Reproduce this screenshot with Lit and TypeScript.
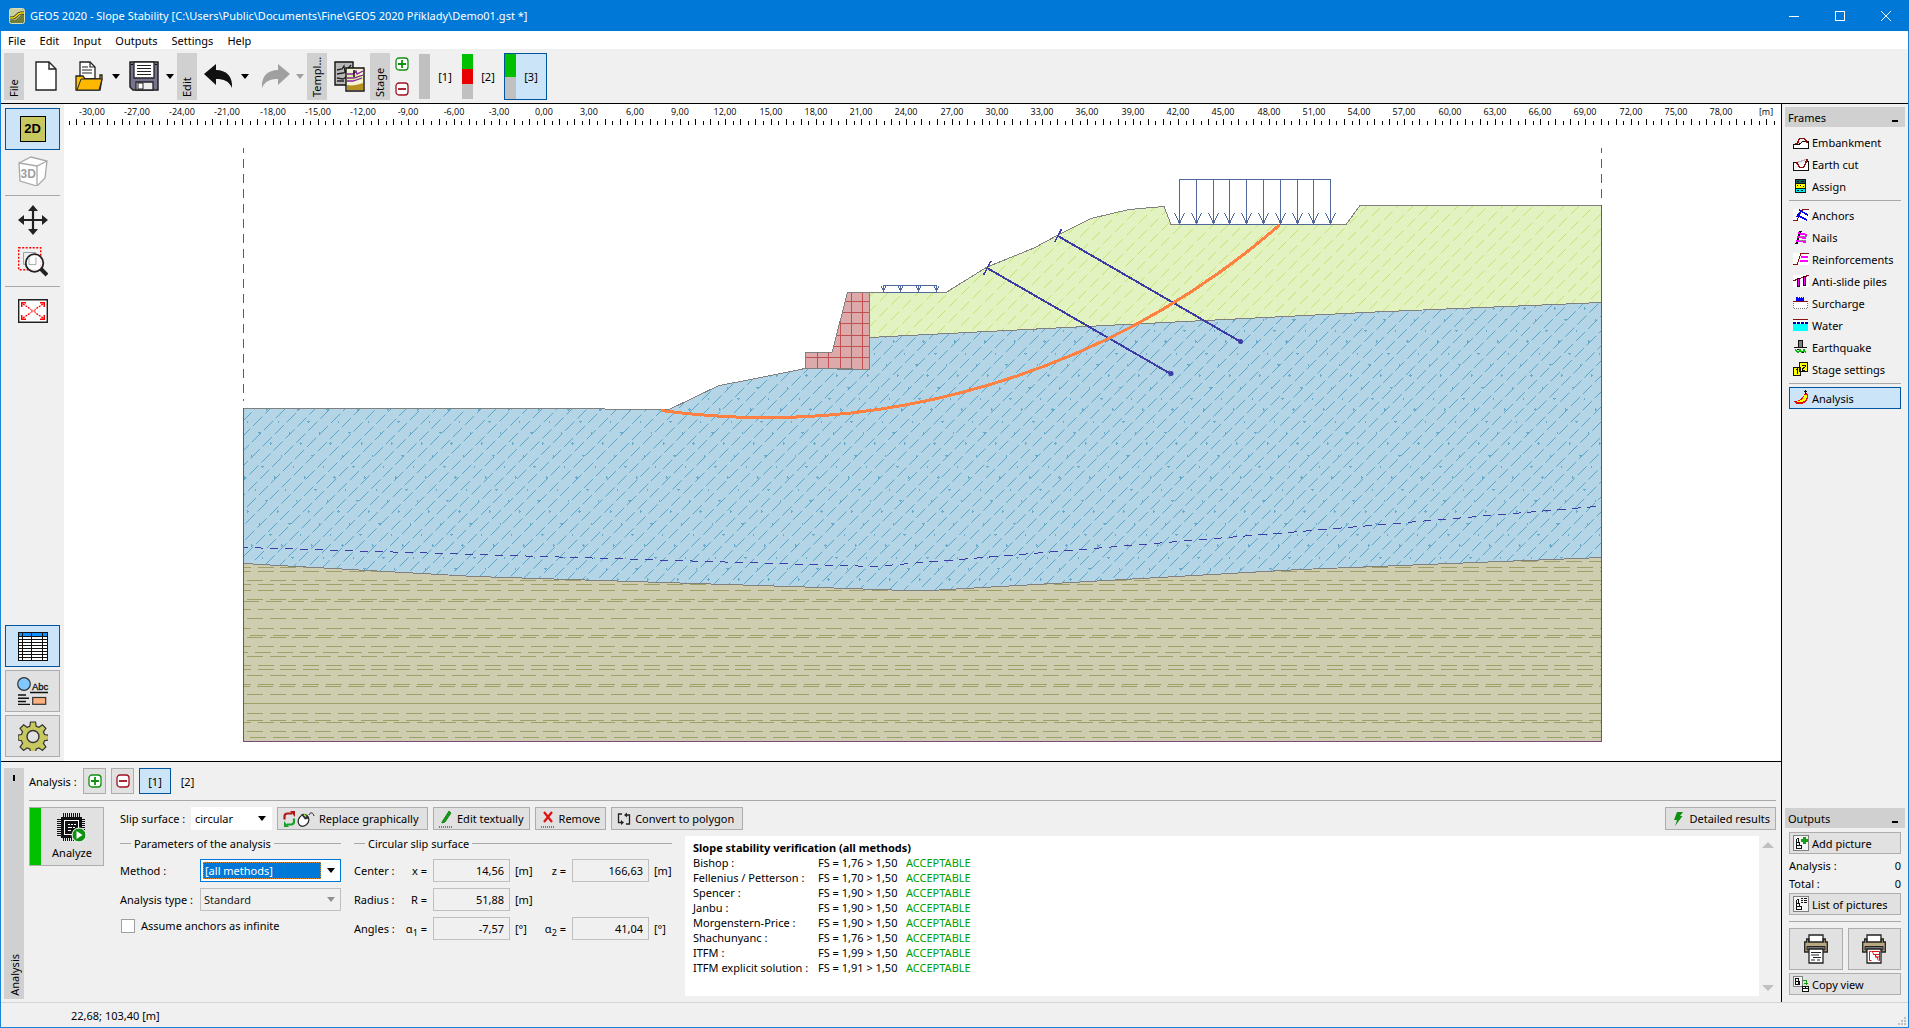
import { LitElement, html, svg, css, nothing } from "lit";
import { customElement } from "lit/decorators.js";
import { classMap } from "lit/directives/class-map.js";

const UNIT = 15.09;
const ORIGIN = 545.2;

/* Soil polygons, in canvas coordinates */
const GREEN =
  "869,292.5 946,292.5 987,267 1002,261 1034,248 1058,235 1091,218.5 1129,209.5 1164,206.5 1171,224.5 1346,224.5 1360,205.5 1601.5,205.5 1601.5,302.5 1375,312 1305,315.5 1155,323 869,337.5";
const BLUE =
  "243.5,408.5 575,408.5 635,409.5 668,410 719,385.5 746,380.5 805,368.5 837,368.5 869,369.5 869,337.5 1155,323 1305,315.5 1375,312 1601.5,302.5 1601.5,557.5 1300,569.5 921,591 790,586.5 475,576.5 243.5,563.5";
const KHAKI =
  "243.5,563.5 475,576.5 790,586.5 921,591 1300,569.5 1601.5,557.5 1601.5,741 243.5,741";
const WALL = "805.5,368.5 805.5,352.5 832,352.5 847.5,292.5 869.5,292.5 869.5,369.5 837.5,369.5 837.5,368.5";

/* Horizontal layers of the lower soil: [y, dash phase] */
const LAYERS: Array<[number, number]> = [
  [561, 16], [567, 4], [571, 4], [580, 16], [584, 4], [590, 4], [599, 16], [601, 12], [609, 4], [618, 16],
  [628, 4], [635, 19], [637, 16], [646, 4], [652, 1], [656, 16], [665, 4], [669, 4], [675, 16], [684, 4],
  [686, 3], [694, 16], [703, -1], [713, 16], [720, 16], [722, 4], [731, 16], [737, 19],
];

function diagonals(x0: number, x1: number, y0: number, y1: number, shift: number) {
  const out = [];
  const h = y1 - y0;
  let i = 0;
  for (let x = x0 - h; x < x1; x += 15.1) {
    const rx = Math.round(x);
    out.push(svg`<line x1=${rx} y1=${y1} x2=${rx + h} y2=${y0} stroke-dashoffset=${(i * shift) % 17}></line>`);
    i++;
  }
  return out;
}

function marks(): string {
  let d = "";
  for (let r = 0; r < 27; r++) {
    const y = Math.round(307.5 + r * 11.33);
    const start = 225 + ((r * 11.3) % 30.2);
    for (let c = 0; c < 46; c++) {
      const x = Math.round(start + c * 30.2);
      const kind = r % 3;
      if (kind === 0) {
        if (c % 4 === 3) d += `M${x - 1} ${y}h1v-1h1v1h1v1h-1v1h-1v-1h-1z`;
        else d += `M${x} ${y - 1}h1v1h1v1h-1v1h-1z`;
      } else if ((c + r) % 3 === 0) {
        d += `M${x - 1} ${y}h3v1h-1v1h-1v-1h-1z`;
      } else d += `M${x} ${y}h1v2h-1z`;
    }
  }
  return d;
}

function layerPath(): string {
  let d = "";
  for (const [y, p] of LAYERS) {
    if (p < 0) {
      d += `M243 ${y}H1602v1H243z`;
      continue;
    }
    for (let x = 1300 + p - 22.75 * 48; x < 1602; x += 22.75) d += `M${Math.round(x)} ${y}h16v1h-16z`;
  }
  return d;
}

function ticks(): string {
  let d = "";
  for (let k = -63; k <= 163; k++) {
    const x = Math.round(ORIGIN + (k * UNIT) / 2) - 1;
    d += k % 2 === 0 ? `M${x} 119h1v6h-1z` : `M${x} 121h1v4h-1z`;
  }
  return d;
}

const pic = (w: number, h: number, body: unknown, smooth = false) =>
  html`<svg class="pic" width=${w} height=${h} viewBox="0 0 ${w} ${h}" fill="none" aria-hidden="true"
    shape-rendering=${smooth ? "auto" : "crispEdges"}>${body}</svg>`;

const ICON = {
  app: pic(16, 16, svg`<rect x=".5" y=".5" width="15" height="15" rx="2" fill="#6f7f3a" stroke="#d8dcb8"/>
    <path d="M1 1h14v5c-5 0-6 6-10 6H1z" fill="#c9cfa0"/><path d="M1 10h3c3 0 4-5 8-5h3" stroke="#222" stroke-width="3"/>
    <path d="M1 10h3c3 0 4-5 8-5h3" stroke="#ffe600" stroke-width="1.6"/>`, true),
  fresh: pic(22, 30, svg`<path d="M1 1h13l7 7v21H1z" fill="#fff" stroke="#222" stroke-width="1.4"/><path d="M14 1v7h7" stroke="#222" stroke-width="1.4"/>`, true),
  open: pic(28, 30, svg`<path d="M5 18V1h10l5 5v12z" fill="#fff" stroke="#222" stroke-width="1.3"/><path d="M15 1v5h5M7 6h6M7 9h10M7 12h10" stroke="#222" stroke-width="1.2"/>
    <path d="M1 29V15h7l2 3h15v-4h2v4l-2 11z" fill="#ffc000" stroke="#222" stroke-width="1.3"/><path d="M2 29l4-11h21l-3 11z" fill="#ffb800" stroke="#222" stroke-width="1"/>`, true),
  save: pic(30, 30, svg`<path d="M1 1h28v28H4l-3-3z" fill="#77738f" stroke="#222" stroke-width="1.5"/><path d="M5 1h20v16H5z" fill="#fff" stroke="#222" stroke-width="1.3"/>
    <path d="M8 4.5h14M8 7.500h14M8 10.500h14M8 13.500h14" stroke="#222"/><path d="M7 29v-8h17v8z" fill="#eee" stroke="#222" stroke-width="1.3"/><path d="M9 22h5v6H9z" fill="#fff" stroke="#222"/><path d="M2 3h2v1H2zM26 3h2v1h-2z" fill="#111"/>`, true),
  undo: pic(30, 24, svg`<path d="M0 10L12 0v6c10 0 17 6 16 18-3-7-8-9-16-9v6z" fill="#111"/>`, true),
  redo: pic(30, 24, svg`<path d="M30 10L18 0v6C8 6 1 12 2 24c3-7 8-9 16-9v6z" fill="#a0a0a0"/>`, true),
  templ: pic(31, 31, svg`<path d="M1 1h18v23H1z" fill="#b8b8b8" stroke="#111" stroke-width="1.4"/><path d="M3 9l5-1 2-3 1 6 6-7M3 13l6-1 7-3M3 17l6 1 3-2M3 20h7" stroke="#222" stroke-width="1.3"/>
    <path d="M12 7h18v23H12z" fill="#f4f4d0" stroke="#111" stroke-width="1.4"/><path d="M13 14h16v5H13z" fill="#e2f2a0"/><path d="M13 13l6 0 3-3 1 3 6-3M13 17l7 0 9-3M13 20l6 0 9-3" stroke="#8020a0" stroke-width="1.3"/><path d="M20 9v7" stroke="#111" stroke-width="1.5"/>
    <path d="M13 24c5 1 10 0 16-2v7H13z" fill="#b89020"/>`, true),
  plus: pic(14, 14, svg`<rect x="1" y="1" width="12" height="12" rx="3" fill="#fff" stroke="#109010" stroke-width="1.3"/><path d="M3 7h8M7 3v8" stroke="#109010" stroke-width="1.8"/>`, true),
  minus: pic(14, 14, svg`<rect x="1" y="1" width="12" height="12" rx="3" fill="#fff" stroke="#a01020" stroke-width="1.3"/><path d="M3 7h8" stroke="#a01020" stroke-width="1.8"/>`, true),
  two: html`<span class="twod">2D</span>`,
  three: pic(30, 30, svg`<path d="M1 7l12-6 16 4-2 17-8 8-17-5z" fill="#fff" stroke="#a8a8a8" stroke-width="1.3"/><path d="M1 7l18 3 10-5M19 10v20" stroke="#a8a8a8" stroke-width="1.3"/>
    <text x="2.500" y="22" font-size="12" font-weight="700" fill="#a0a0a0" font-family="Liberation Sans, sans-serif">3D</text>`, true),
  move: pic(30, 30, svg`<path d="M15 3v24M3 15h24" stroke="#222" stroke-width="2.200"/><path d="M15 0l5 6H10zM15 30l5-6H10zM0 15l6-5v10zM30 15l-6-5v10z" fill="#222"/>`, true),
  zoom: pic(30, 30, svg`<path d="M.7.7h22v22h-22z" stroke="#f00" stroke-width="1.400" stroke-dasharray="2 1.500"/><path d="M5.500 5.500h12v12h-12z" stroke="#a0a0a0"/>
    <circle cx="16.500" cy="16" r="8.800" fill="#fff" fill-opacity=".85" stroke="#222" stroke-width="1.800"/><path d="M11 10.500v7h7v-7" stroke="#b0b0b0" stroke-width="1"/><path d="M23 22l6 6" stroke="#222" stroke-width="4"/>`, true),
  fit: pic(30, 24, svg`<path d="M.7.7h28.600v22.600H.7z" fill="#fff" stroke="#222" stroke-width="1.400"/><path d="M5 5l8 5.500M25 5l-8 5.500M5 19l8-5.500M25 19l-8-5.500" stroke="#f00" stroke-width="1.300" stroke-dasharray="2 1"/>
    <path d="M3 3h5v1.500H4.500V8H3zM27 3h-5v1.500h3.500V8H27zM3 21h5v-1.500H4.500V16H3zM27 21h-5v-1.500h3.500V16H27z" fill="#f00"/><path d="M13 10.500h1.500v1H16v-1h1.500v3H16v-1h-1.500v1H13z" fill="#f66"/>`, true),
  grid: pic(30, 29, svg`<path d="M0 0h30v29H0z" fill="#fff"/><path d="M0 0h30v4H0z" fill="#1090ff"/><path d="M.5.5h29v28H.5zM0 4.500h30M0 7.500h30M0 10.500h30M0 13.500h30M0 16.500h30M0 19.500h30M0 22.500h30M0 25.500h30M4.500 0v29M13.500 0v29M24.500 0v29" stroke="#111"/>`),
  abc: pic(32, 28, svg`<circle cx="7" cy="7" r="6.300" fill="#80c8ff" stroke="#333" stroke-width="1.200"/><text x="15" y="13" font-size="9.500" fill="#111" stroke="#111" stroke-width=".3" font-family="Liberation Sans, sans-serif">Abc</text>
    <path d="M13 15.500h18" stroke="#111" stroke-width="1.500"/><path d="M1 18h8M1 21.200h11M1 24.400h8M1 27.400h12" stroke="#111" stroke-width="1.500"/><rect x="15.700" y="20.500" width="13" height="6.800" fill="#ffb080" stroke="#333" stroke-width="1.200"/>`, true),
  gear: pic(30, 30, svg`<path d="M12.500 1h5l.7 4.200 2.700 1.100 3.500-2.500 3.500 3.500-2.500 3.500 1.100 2.700 4 .7v4.800l-4 .7-1.100 2.700 2.500 3.500-3.500 3.500-3.500-2.500-2.700 1.100-.7 3.500h-5l-.7-3.500-2.700-1.100-3.500 2.500-3.500-3.500 2.500-3.500-1.100-2.700-3.500-.7v-4.800l3.500-.7 1.100-2.700L2.100 7.300l3.500-3.500 3.500 2.500 2.700-1.100z" fill="#c8c860" stroke="#333" stroke-width="1.200"/><circle cx="15" cy="15.500" r="6" fill="#e1e1e1" stroke="#333" stroke-width="1.400"/>`, true),
  chip: pic(30, 30, svg`<path d="M6.500 0v28M8.500 0v28M10.500 0v28M12.500 0v28M14.500 0v28M16.500 0v28M18.500 0v28M20.500 0v28M22.500 0v28M0 6.500h28M0 8.500h28M0 10.500h28M0 12.500h28M0 14.500h28M0 16.500h28M0 18.500h28M0 20.500h28M0 22.500h28" stroke="#111"/>
    <path d="M4 4h21v21H4z" fill="#111"/><path d="M7.500 7.500h14v14h-14z" stroke="#fff"/><path d="M11 11h2v1h-2zM14 11h2v1h-2zM17 11h2v1h-2zM11 14h4v1h-4zM16 14h2v1h-2zM11 17h3v1h-3z" fill="#fff"/>
    <g shape-rendering="auto"><circle cx="22" cy="22" r="7" fill="#109010" stroke="#fff"/><path d="M19.500 18v8l6-4z" fill="#fff"/></g>`),
  swap: pic(32, 16, svg`<path d="M1.500 8.500V5.500Q1.500 2.500 4.500 2.500H9" stroke="#b01818" stroke-width="2.200"/><path d="M7 0h5v6z" fill="#b01818"/><path d="M11 7.500v3q0 3-3 3H4" stroke="#18a028" stroke-width="2.200"/><path d="M1 10v6h5z" fill="#18a028"/>
    <ellipse cx="20.500" cy="9.500" rx="5" ry="6" fill="#fff" stroke="#222" stroke-width="1.200" transform="rotate(35 20.500 9.500)"/><path d="M18 3.500c3-2 7 0 8 4l-4 1z" fill="#333"/><path d="M21 3.500l2 2" stroke="#9f3" stroke-width="1.500"/><path d="M26 4c1-3 4-3 5 1" stroke="#222"/>`, true),
  pen: pic(14, 18, svg`<path d="M3 12L10 1l2 2-6 9-3 1z" fill="#10a010" stroke="#107010" stroke-width=".8"/><path d="M0 17h14" stroke="#111" stroke-dasharray="1 1"/>`, true),
  cross: pic(14, 18, svg`<path d="M3 2l8 10M11 2L3 12" stroke="#e01010" stroke-width="2.200"/><path d="M0 17h14" stroke="#111" stroke-dasharray="1 1"/>`, true),
  loop: pic(14, 14, svg`<path d="M5 2H1.500v8.500H5M9 12h3.500V3H9" stroke="#222" stroke-width="1.300"/><path d="M4 8l3 2.500L4 13zM10 .5L7 3l3 2.500z" fill="#222"/>`, true),
  bolt: pic(10, 14, svg`<path d="M4 0h6L7 4h2.500L2 14l2-6H1z" fill="#109010"/>`, true),
  addPic: pic(16, 16, svg`<path d="M.5.5h15v15H.5z" fill="#f4f4f4" stroke="#808080"/><path d="M3.500 3.500v10h5v-3h-5M3.500 7.500h3v3M3.500 3.500h2v4" stroke="#111"/><path d="M8 4h2V2h3v2h2v3h-2v2h-3V7H8z" fill="#10a010"/>`),
  listPic: pic(16, 16, svg`<path d="M.5.5h15v15H.5z" fill="#f4f4f4" stroke="#808080"/><path d="M3.500 3.500v10h5v-3h-5M3.500 7.500h3v3M3.500 3.500h2v4" stroke="#111"/><path d="M8 2.500h2M11 2.500h3M8 4.500h2M11 4.500h3M8 6.500h2M11 6.500h3" stroke="#111"/>`),
  copyPic: pic(16, 16, svg`<path d="M.5.5h9v10h-9z" fill="#f4f4f4" stroke="#808080"/><path d="M2.500 2.500v6h3v-6zM2.500 5.500h4v3" stroke="#111"/><path d="M10 4.500h3v4M11 7.500h4" stroke="#10a010"/><path d="M9.500 10.500h6v5h-6zM9.500 12.500h6M12.500 11v1" stroke="#111" fill="#fff"/>`),
  print: (body: unknown) => pic(24, 30, svg`<path d="M5 8V1h14v7" fill="#fff" stroke="#222" stroke-width="1.300"/><path d="M.7 8h2V5h2v3h14.600V5h2v3h2v10H.7z" fill="#b8a880" stroke="#222" stroke-width="1.300"/>
    <path d="M3 12.500h18v3.500H3z" fill="#777" stroke="#222"/><path d="M5 15h14v14H5z" fill="#fff" stroke="#222" stroke-width="1.300"/>${body}`, true),
};

const printText = svg`<path d="M7 18.500h10M7 21h8M9 23.500h8M7 26h4M13 26h3" stroke="#222" stroke-width="1.200"/>`;
const printView = svg`<path d="M9.500 17.500H7.500v9h2" stroke="#e01010"/><path d="M10 17.500h7.500v9c-2 0-2-2-2-3.500h-2v-2.500h-2c0-1.500-1-2-1.500-3zM11.500 20.500h6M13.500 23h4" stroke="#e01010"/>`;

/* Frame icons, 16x16 */
const FRAMES: Array<Array<[string, unknown]>> = [
  [
    ["Embankment", svg`<path d="M.5 14.500v-4H6l4-3h5.500v7z" fill="#fff" stroke="#111"/><path d="M2 9.500h2.500l2-5h5l3 5" stroke="#8b0f0f" stroke-width="1.500"/>`],
    ["Earth cut", svg`<path d="M.5 14.500v-8H3.500M12.500 5.500h3v9H.5" fill="#fff" stroke="#111"/><path d="M4 6.500l9-3" stroke="#bbb"/><path d="M3.500 6l3 5.500h4l4-8.500" stroke="#8b0f0f" stroke-width="1.500"/>`],
    ["Assign", svg`<path d="M2.500 1.500h10v13h-10z" fill="#ff0" stroke="#111"/><path d="M3 2h9v3H3z" fill="#106060"/><path d="M3 11h9v3H3z" fill="#0ee"/><path d="M3 5.500h9M3 10.500h9M4 7.500h1M7 7.500h1M10 8.500h1M4 12.500h2M8 12.500h2M4 3.500h2M8 3.500h3" stroke="#111"/>`],
  ],
  [
    ["Anchors", svg`<path d="M0 2h16v12H0z" fill="#fff"/><path d="M0 13.500h4l4-9 2-2h6" stroke="#8b0f0f"/><path d="M6 3l9 5M4 8l10 5M4 10l4-6" stroke="#00e" stroke-width="1.600"/>`],
    ["Nails", svg`<path d="M2 14.500h2l3-12h2" stroke="#111" stroke-width="1.500"/><path d="M5 4l9 2M4 8l9 1M3 11.500l10 1.500" stroke="#f0f" stroke-width="2"/><path d="M6 7l8 1M6 11l7 1" stroke="#888"/>`],
    ["Reinforcements", svg`<path d="M0 2h16v12H0z" fill="#fff"/><path d="M0 13.500h4l4-11h8" stroke="#8b0f0f"/><path d="M8 6h7M7 10h8" stroke="#f0f" stroke-width="2"/>`],
    ["Anti-slide piles", svg`<path d="M0 2h16v12H0z" fill="#fff"/><path d="M0 7.500l5-1 6-3 5-1" stroke="#8b0f0f"/><path d="M4.500 5.500h2v8h-2zM10.500 3.500h2v9h-2z" fill="#f0f" stroke="#111"/>`],
    ["Surcharge", svg`<path d="M0 7h15v7H0z" fill="#fff"/><path d="M3 2h2v1h1V2h1v1h1V2h1v1h1V2h1v4H3z" fill="#00f"/><path d="M0 6.500h15" stroke="#8b0f0f"/><path d="M.5 8v5.500h14V8" stroke="#777" stroke-dasharray="1 1"/>`],
    ["Water", svg`<path d="M0 3h15v11H0z" fill="#fff"/><path d="M0 7h15v7H0z" fill="#0ff"/><path d="M0 2.500h15" stroke="#8b0f0f"/><path d="M0 6h15" stroke="#00a" stroke-width="2" stroke-dasharray="3 1"/>`],
    ["Earthquake", svg`<path d="M5.500 1.500h4v7h-4z" fill="#808080" stroke="#111"/><path d="M1 8.500h13" stroke="#111"/><path d="M2 10l3 4M5 14l2-4 2 4 2-4 2 4M3 12h10" stroke="#0b0"/><path d="M4 10.500h2M9 13.500h2" stroke="#111"/>`],
    ["Stage settings", svg`<path d="M6.500 1.500h8v9h-8zM.5 6.500h7v8h-7z" fill="#ff0" stroke="#111" stroke-width="1.200"/><path d="M9 4h3v2l-3 2v1h3M3 9l1-1v5" stroke="#111"/>`],
  ],
  [["Analysis", svg`<path d="M0 11h3c4 0 7-4 9-8l3 1c1 4-1 9-6 10-3 1-6 0-9-3z" fill="#e01010"/><path d="M4 11.500c4 0 6-3 8-7l2 1c0 4-3 7-7 7z" fill="#ff0"/><path d="M12.500 0v4M11 1.500h3" stroke="#111"/>`]],
];

const RESULTS = [
  ["Bishop :", "1,76"], ["Fellenius / Petterson :", "1,70"], ["Spencer :", "1,90"], ["Janbu :", "1,90"],
  ["Morgenstern-Price :", "1,90"], ["Shachunyanc :", "1,76"], ["ITFM :", "1,99"], ["ITFM explicit solution :", "1,91"],
];

@customElement("slope-canvas")
class SlopeCanvas extends LitElement {
  static styles = css`
    :host { display: block; min-width: 0; min-height: 0; background: #fff; }
    svg { display: block; width: 100%; height: 100%; }
    text { font: 9px "Open Sans", "Noto Sans", sans-serif; fill: #000; text-anchor: middle; }
    .edge { fill: none; stroke: #808080; }
    .bound { stroke: #7b4a7b; fill: none; }
    .load { stroke: #50689c; fill: none; }
    .anchor { stroke: #3c3ca4; fill: none; }
  `;

  private surcharge() {
    const n = [];
    for (let i = 0; i < 10; i++) {
      const x = Math.round(1179 + i * 16.8) + 0.5;
      n.push(svg`<path d="M${x} 179V224M${x - 5} 213L${x} 223.500L${x + 5} 213"></path>`);
    }
    for (const x of [883.5, 900.5, 918.5, 936.5])
      n.push(svg`<path d="M${x} 285V292M${x - 2} 286.500L${x} 291.500L${x + 2} 286.500"></path>`);
    return n;
  }

  render() {
    const labels = [];
    for (let v = -30; v <= 78; v += 3)
      labels.push(svg`<text x=${Math.round(ORIGIN + v * UNIT) - 1} y="115">${v},00</text>`);
    return html`
      <svg viewBox="64 104 1717 657" preserveAspectRatio="xMidYMin meet" shape-rendering="crispEdges" role="img" aria-label="Slope model">
        <defs>
          <clipPath id="g"><polygon points=${GREEN}></polygon></clipPath>
          <clipPath id="b"><polygon points=${BLUE}></polygon></clipPath>
          <clipPath id="k"><polygon points=${KHAKI}></polygon></clipPath>
          <clipPath id="w"><polygon points=${WALL}></polygon></clipPath>
        </defs>
        ${labels}
        <text x="1766" y="115">[m]</text>
        <path d=${ticks()} fill="#000"></path>

        <polygon points=${GREEN} fill="#e2f2c1"></polygon>
        <g clip-path="url(#g)" stroke="#c3e46e" stroke-dasharray="12 5" shape-rendering="auto">${diagonals(860, 1602, 200, 345, 5)}</g>
        <polygon points=${BLUE} fill="#b4d5e6"></polygon>
        <g clip-path="url(#b)">
          <g stroke="#5ba5c8" stroke-dasharray="13 4" shape-rendering="auto">${diagonals(243, 1602, 300, 592, 6)}</g>
          <path d=${marks()} fill="#67abcc"></path>
        </g>
        <polygon points=${KHAKI} fill="#cecdb0"></polygon>
        <path d=${layerPath()} fill="#9f9f68" clip-path="url(#k)"></path>
        <polygon points=${WALL} fill="#dcaaaa"></polygon>
        <path clip-path="url(#w)" stroke="#c05050" d="M800 301.500h70M800 312.500h70M800 323.500h70M800 335.500h70M800 346.500h70M800 357.500h70M817.500 290v80M828.500 290v80M840.500 290v80M851.500 290v80M862.500 290v80"></path>

        <polygon class="edge" points=${GREEN}></polygon>
        <polygon class="edge" points=${BLUE}></polygon>
        <polygon class="edge" points=${WALL}></polygon>
        <path class="bound" d="M243.500 408V741.500H1601.500V205"></path>
        <path class="bound" stroke-dasharray="9 6" stroke-dashoffset="4" d="M243.500 148V401"></path>
        <path class="bound" stroke-dasharray="9 6" stroke-dashoffset="4" d="M1601.500 148V200"></path>
        <path class="anchor" stroke-dasharray="8.500 6.500" stroke-dashoffset="4" d="M244 547.500L874 566.500L1300 531.500L1602 506"></path>

        <path class="load" d="M1179 179.500H1331M1179 224.500H1331M883 285.500H937M883 292.500H937"></path>
        <g class="load">${this.surcharge()}</g>
        <g class="anchor" stroke-width="2">
          <path d="M987 268L1171 374M1058 236L1241 342"></path>
          <path stroke-width="1.500" d="M983.500 275L991 261M1054.500 242.500L1061.500 229"></path>
        </g>
        <g shape-rendering="auto" fill="#3c3ca4">
          <circle cx="1171" cy="373.500" r="2.500"></circle>
          <circle cx="1240.500" cy="341.500" r="2.500"></circle>
        </g>
        <path d="M661 410.500A783 783 0 0 0 1279.500 225" fill="none" stroke="#ff8040" stroke-width="3"></path>
      </svg>
    `;
  }
}

@customElement("app-root")
class AppRoot extends LitElement {
  static styles = css`
    :host { display: block; font: 11px/15px "Noto Sans", "Open Sans", sans-serif; color: #000; }
    * { box-sizing: border-box; }
    button, select, input { font: inherit; color: inherit; margin: 0; border-radius: 0; }
    button { display: flex; align-items: center; padding: 0; background: none; border: 0; white-space: nowrap; }
    .pic { display: block; flex: none; }
    .window { display: grid; grid-template-rows: 31px 18px 55px minmax(0, 1fr) 25px; height: 100vh; background: #f0f0f0; border: 1px solid #1883d7; border-top: 0; }

    .title { display: flex; align-items: center; gap: 5px; padding-left: 9px; margin: 0 -1px; background: #0078d7; color: #fff; }
    .title .name { flex: 1; font-weight: 400; font-size: 11px; margin: 0; }
    .title .ctl { display: flex; }
    .title button { width: 46px; height: 31px; justify-content: center; }

    .menu { display: flex; align-items: center; gap: 14px; padding-left: 7px; background: #fff; }

    .tools { display: flex; align-items: center; padding: 0 3px; border-bottom: 1px solid #000; }
    .tab { width: 20px; height: 47px; background: #d0d0d0; writing-mode: vertical-rl; transform: rotate(180deg); padding: 3px 0; line-height: 20px; overflow: hidden; white-space: nowrap; }
    .tab.file { margin-right: 11px; }
    .tab.edit { margin-right: 7px; }
    .drop { width: 14px; height: 47px; justify-content: center; }
    .drop::after { content: ""; border: 4px solid transparent; border-top: 5px solid #000; border-bottom: 0; }
    .drop:disabled::after { border-top-color: #a0a0a0; }
    .tools .fresh { margin-right: 18px; }
    .tools .open { margin-right: 6px; }
    .tools .save { margin: 0 4px 0 6px; }
    .tools .undo { margin-right: 4px; }
    .tools .redo { margin: 0 3px 0 8px; }
    .tools .tpl { margin: 0 5px 0 7px; }
    .pm { display: flex; flex-direction: column; gap: 11px; margin: 0 9px 0 5px; }
    .stage { width: 43px; height: 47px; border: 1px solid transparent; }
    .stage .bar { width: 11px; height: 45px; display: flex; flex-direction: column; background: #c0c0c0; }
    .stage .bar i { display: block; height: 15px; background: #00c000; }
    .stage .bar i.bad { background: #e80000; }
    .stage .bar i.tall { height: 23px; }
    .stage .no { flex: 1; text-align: center; }
    .on { background: #cce4f7; border: 1px solid #0055a0; }

    .main { display: grid; grid-template-columns: minmax(0, 1fr) 127px; min-height: 0; }
    .work { display: grid; grid-template-rows: minmax(0, 1fr) auto; min-height: 0; }
    .view { display: grid; grid-template-columns: 63px minmax(0, 1fr); min-height: 0; }
    .side { display: flex; flex-direction: column; padding: 4px; }
    .side button { width: 55px; height: 42px; justify-content: center; border: 1px solid transparent; flex: none; }
    .side button.on { border-color: #0055a0; }
    .side button.raised { background: #e1e1e1; border-color: #adadad; margin-top: 3px; }
    .side hr { width: 55px; margin: 3px 0; }
    .side .low { margin-top: auto; }
    hr { border: 0; border-top: 1px solid #a8a8a8; margin: 0; }
    .twod { width: 26px; height: 26px; border: 1px solid #000; background: #c8c860; font: 700 13px/24px "Liberation Sans", sans-serif; text-align: center; }

    .panel { display: grid; grid-template-columns: 20px minmax(0, 1fr); gap: 5px; padding: 6px 5px 3px 3px; border-top: 1px solid #000; }
    .vtab { display: flex; flex-direction: column; justify-content: space-between; align-items: center; background: #d0d0d0; padding: 7px 0 3px; }
    .vtab i { width: 2px; height: 6px; background: #000; }
    .vtab span { writing-mode: vertical-rl; transform: rotate(180deg); }
    .body { display: flex; flex-direction: column; gap: 6px; padding-bottom: 3px; }
    .runs { display: flex; align-items: center; gap: 5px; }
    .runs span { width: 49px; white-space: nowrap; }
    .runs button { width: 23px; height: 26px; justify-content: center; }
    .runs button.on { width: 32px; }
    .btn { background: #e1e1e1; border: 1px solid #adadad; }
    .area { display: grid; grid-template-columns: 75px minmax(0, 1fr); gap: 16px; align-items: start; }
    .analyze { display: grid; grid-template-columns: 11px 1fr; height: 59px; align-items: stretch; width: 75px; }
    .analyze .ok { background: #00c000; }
    .analyze .in { display: flex; flex-direction: column; align-items: center; gap: 2px; padding-top: 5px; }
    .right { display: flex; flex-direction: column; gap: 6px; }
    .row { display: flex; align-items: center; gap: 5px; height: 23px; }
    .row label { width: 66px; white-space: nowrap; }
    .row .btn { height: 23px; padding: 0 5px; gap: 4px; }
    .row .wide { min-width: 151px; }
    .row .mid { min-width: 132px; }
    .row .push { margin-left: auto; padding: 0 5px 0 7px; gap: 6px; }
    .pick { position: relative; display: flex; height: 23px; }
    .pick select { appearance: none; width: 100%; height: 23px; padding: 0 20px 0 4px; background: #fff; border: 0; outline: 0; }
    .pick::after { content: ""; position: absolute; right: 6px; top: 9px; border: 4px solid transparent; border-top: 5px solid #000; border-bottom: 0; pointer-events: none; }
    .pick.slip { width: 81px; }
    .pick.all select { border: 1px solid #0078d7; color: #fff; background: linear-gradient(#0078d7, #0078d7) 2px 2px / calc(100% - 21px) 17px no-repeat #fff; }
    .pick.all::before { content: ""; position: absolute; inset: 3px 20px 3px 3px; border: 1px dotted #e08830; pointer-events: none; }
    .pick.off select { border: 1px solid #c0c0c0; background: #f0f0f0; padding-left: 3px; color: #222; opacity: 1; }
    .pick.off::after { border-top-color: #909090; }
    .cols { display: grid; grid-template-columns: 221px 318px minmax(0, 1fr); gap: 13px; align-items: start; }
    fieldset { border: 0; margin: 0; padding: 0; min-width: 0; }
    .legend { display: flex; align-items: center; gap: 3px; height: 15px; width: 100%; padding: 0; margin-bottom: 8px; white-space: nowrap; }
    .legend::before { content: ""; width: 11px; border-top: 1px solid #a8a8a8; }
    .legend::after { content: ""; flex: 1; border-top: 1px solid #a8a8a8; }
    .params { display: grid; grid-template-columns: 80px 141px; row-gap: 6px; align-items: center; }
    .check { display: flex; align-items: center; gap: 6px; grid-column: span 2; height: 15px; margin-top: 1px; }
    .check input { appearance: none; width: 14px; height: 14px; border: 1px solid #a0a0a0; background: #fff; margin-left: 1px; }
    .nums { display: grid; grid-template-columns: 44px 29px 83px 24px 32px 83px 23px; row-gap: 6px; align-items: center; }
    .nums .sym { text-align: right; white-space: nowrap; }
    .nums .unit { padding-left: 5px; }
    .nums input { width: 77px; height: 23px; margin-left: 6px; border: 1px solid #c0c0c0; background: #f0f0f0; text-align: right; padding: 0 5px; }
    sub { font-size: 9px; line-height: 0; }
    .out { display: grid; grid-template-columns: minmax(0, 1fr) 17px; height: 160px; }
    .paper { background: #fff; padding: 4px 8px; overflow: hidden; }
    .paper h2 { margin: 0; font-size: 11px; line-height: 15px; }
    table { border-collapse: collapse; }
    th { font-weight: 400; text-align: left; padding: 0; width: 125px; white-space: nowrap; }
    td { padding: 0; width: 88px; white-space: nowrap; }
    .acc { color: #00a000; }
    .bar2 { display: flex; flex-direction: column; justify-content: space-between; align-items: flex-end; padding: 6px 2px 5px; }
    .bar2 i { border: 6px solid transparent; border-bottom: 6px solid #c0c0c0; border-top: 0; }
    .bar2 i.dn { border-top: 6px solid #c0c0c0; border-bottom: 0; }

    .frames { display: flex; flex-direction: column; border-left: 1px solid #000; padding: 3px; }
    .head { display: flex; justify-content: space-between; align-items: center; height: 20px; background: #d0d0d0; padding: 0 7px 0 3px; }
    .head h2 { margin: 0; font-size: 11px; font-weight: 400; }
    .head i { width: 6px; height: 2px; background: #000; margin-top: 7px; }
    .group { display: flex; flex-direction: column; margin: 3px 4px 0; }
    .group.first { margin-top: 4px; }
    .group + .group { border-top: 1px solid #a8a8a8; padding-top: 3px; }
    .group button { height: 22px; gap: 3px; padding-left: 3px; border: 1px solid transparent; }
    .group button.on { border-color: #0055a0; }
    .outs { display: flex; flex-direction: column; margin: 4px; }
    .outs .btn { height: 22px; padding-left: 3px; gap: 3px; }
    .outs .tot { display: grid; grid-template-columns: 1fr auto; margin: 3px 0 0; line-height: 18px; }
    .outs .tot dt, .outs .tot dd { margin: 0; }
    .outs hr { margin: 6px 0; }
    .prints { display: grid; grid-template-columns: 1fr 1fr; gap: 5px; margin-bottom: 3px; }
    .prints .btn { height: 42px; padding: 0; justify-content: center; }
    .frames .grow { flex: 1; }
    .status { display: flex; align-items: center; justify-content: space-between; border-top: 1px solid #d5d5d5; padding: 0 2px 0 70px; }
    .status svg { align-self: flex-end; margin-bottom: 2px; }
  `;

  private num(id: string, label: unknown, value: string) {
    return html`<label class="sym" for=${id}>${label} =</label><input id=${id} .value=${value} readonly />`;
  }

  render() {
    return html`
      <div class="window">
        <header class="title">
          ${ICON.app}
          <h1 class="name">GEO5 2020 - Slope Stability [C:\\Users\\Public\\Documents\\Fine\\GEO5 2020 Příklady\\Demo01.gst *]</h1>
          <div class="ctl">
            <button aria-label="Minimize">${pic(10, 10, svg`<path d="M0 5.500h10" stroke="#fff"/>`)}</button>
            <button aria-label="Maximize">${pic(10, 10, svg`<path d="M.5.5h9v9h-9z" stroke="#fff"/>`)}</button>
            <button aria-label="Close">${pic(10, 10, svg`<path d="M0 0l10 10M10 0L0 10" stroke="#fff"/>`, true)}</button>
          </div>
        </header>
        <nav class="menu">${["File", "Edit", "Input", "Outputs", "Settings", "Help"].map((m) => html`<button>${m}</button>`)}</nav>
        <div class="tools">
          <div class="tab file">File</div>
          <button class="fresh" aria-label="New">${ICON.fresh}</button>
          <button class="open" aria-label="Open">${ICON.open}</button>
          <button class="drop" aria-label="Recent files"></button>
          <button class="save" aria-label="Save">${ICON.save}</button>
          <button class="drop" aria-label="Save options"></button>
          <div class="tab edit">Edit</div>
          <button class="undo" aria-label="Undo">${ICON.undo}</button>
          <button class="drop" aria-label="Undo list"></button>
          <button class="redo" aria-label="Redo" disabled>${ICON.redo}</button>
          <button class="drop" aria-label="Redo list" disabled></button>
          <div class="tab">Templ...</div>
          <button class="tpl" aria-label="Templates">${ICON.templ}</button>
          <div class="tab">Stage</div>
          <div class="pm">
            <button aria-label="Add stage">${ICON.plus}</button>
            <button aria-label="Remove stage">${ICON.minus}</button>
          </div>
          <button class="stage"><span class="bar"></span><span class="no">[1]</span></button>
          <button class="stage"><span class="bar"><i></i><i class="bad"></i></span><span class="no">[2]</span></button>
          <button class="stage on"><span class="bar"><i class="tall"></i></span><span class="no">[3]</span></button>
        </div>

        <div class="main">
          <div class="work">
            <div class="view">
              <div class="side">
                <button class="on" aria-label="2D view">${ICON.two}</button>
                <button aria-label="3D view" disabled>${ICON.three}</button>
                <hr />
                <button aria-label="Move">${ICON.move}</button>
                <button aria-label="Zoom">${ICON.zoom}</button>
                <hr />
                <button aria-label="Fit view">${ICON.fit}</button>
                <button class="on low" aria-label="Tables">${ICON.grid}</button>
                <button class="raised" aria-label="Drawing style">${ICON.abc}</button>
                <button class="raised" aria-label="Settings">${ICON.gear}</button>
              </div>
              <slope-canvas></slope-canvas>
            </div>
            <section class="panel">
              <div class="vtab"><i></i><span>Analysis</span></div>
              <div class="body">
                <div class="runs">
                  <span>Analysis :</span>
                  <button class="btn" aria-label="Add analysis">${ICON.plus}</button>
                  <button class="btn" aria-label="Remove analysis">${ICON.minus}</button>
                  <button class="on">[1]</button>
                  <button>[2]</button>
                </div>
                <hr />
                <div class="area">
                  <button class="btn analyze"><span class="ok"></span><span class="in">${ICON.chip}Analyze</span></button>
                  <div class="right">
                    <div class="row">
                      <label for="slip">Slip surface :</label>
                      <span class="pick slip"><select id="slip"><option>circular</option></select></span>
                      <button class="btn wide">${ICON.swap}Replace graphically</button>
                      <button class="btn">${ICON.pen}Edit textually</button>
                      <button class="btn">${ICON.cross}Remove</button>
                      <button class="btn mid">${ICON.loop}Convert to polygon</button>
                      <button class="btn push">${ICON.bolt}Detailed results</button>
                    </div>
                    <div class="cols">
                      <fieldset aria-label="Parameters of the analysis">
                        <div class="legend">Parameters of the analysis</div>
                        <div class="params">
                          <label for="method">Method :</label>
                          <span class="pick all"><select id="method"><option>[all methods]</option></select></span>
                          <label for="type">Analysis type :</label>
                          <span class="pick off"><select id="type" disabled><option>Standard</option></select></span>
                          <label class="check"><input type="checkbox" />Assume anchors as infinite</label>
                        </div>
                      </fieldset>
                      <fieldset aria-label="Circular slip surface">
                        <div class="legend">Circular slip surface</div>
                        <div class="nums">
                          <span>Center :</span>${this.num("cx", "x", "14,56")}<span class="unit">[m]</span>
                          ${this.num("cz", "z", "166,63")}<span class="unit">[m]</span>
                          <span>Radius :</span>${this.num("r", "R", "51,88")}<span class="unit">[m]</span>
                          <span></span><span></span><span></span>
                          <span>Angles :</span>${this.num("a1", html`α<sub>1</sub>`, "-7,57")}<span class="unit">[°]</span>
                          ${this.num("a2", html`α<sub>2</sub>`, "41,04")}<span class="unit">[°]</span>
                        </div>
                      </fieldset>
                      <div class="out">
                        <div class="paper">
                          <h2>Slope stability verification (all methods)</h2>
                          <table>
                            ${RESULTS.map(([n, f]) => html`<tr><th scope="row">${n}</th><td>FS = ${f} &gt; 1,50</td><td class="acc">ACCEPTABLE</td></tr>`)}
                          </table>
                        </div>
                        <div class="bar2"><i></i><i class="dn"></i></div>
                      </div>
                    </div>
                  </div>
                </div>
              </div>
            </section>
          </div>

          <aside class="frames">
            <div class="head"><h2>Frames</h2><i></i></div>
            ${FRAMES.map((g, gi) => html`<div class=${classMap({ group: true, first: gi === 0 })}>
              ${g.map(([n, body]) => html`<button class=${gi === 2 ? "on" : nothing}>${pic(16, 16, body)}${n}</button>`)}
            </div>`)}
            <div class="grow"></div>
            <div class="head"><h2>Outputs</h2><i></i></div>
            <div class="outs">
              <button class="btn">${ICON.addPic}Add picture</button>
              <dl class="tot"><dt>Analysis :</dt><dd>0</dd><dt>Total :</dt><dd>0</dd></dl>
              <button class="btn">${ICON.listPic}List of pictures</button>
              <hr />
              <div class="prints">
                <button class="btn" aria-label="Print report">${ICON.print(printText)}</button>
                <button class="btn" aria-label="Print view">${ICON.print(printView)}</button>
              </div>
              <button class="btn">${ICON.copyPic}Copy view</button>
            </div>
          </aside>
        </div>

        <footer class="status">
          <span>22,68; 103,40 [m]</span>
          ${pic(8, 8, svg`<path d="M6 0h2v2H6zM3 3h2v2H3zM6 3h2v2H6zM0 6h2v2H0zM3 6h2v2H3zM6 6h2v2H6z" fill="#bfbfbf"/>`)}
        </footer>
      </div>
    `;
  }
}
